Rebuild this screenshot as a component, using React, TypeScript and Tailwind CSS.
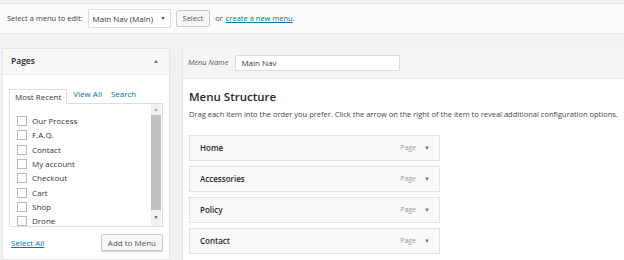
import React from "react";

const PAGES = ["Our Process", "F.A.Q.", "Contact", "My account", "Checkout", "Cart", "Shop", "Drone"];
const ITEMS = ["Home", "Accessories", "Policy", "Contact"];

function Checkbox() {
  return <span className="w-[10px] h-[10px] border border-[#b4b9be] bg-white shrink-0" />;
}

function PagesBox() {
  return (
    <div className="w-[168px] bg-white border border-[#e5e5e5] flex flex-col self-stretch">
      {/* header */}
      <div className="h-[26px] bg-[#f7f7f7] border-b border-[#eeeeee] flex items-center justify-between px-[8px]">
        <span className="text-[8.5px] font-semibold text-[#23282d]">Pages</span>
        <span className="text-[6px] text-[#72777c] mr-[2px]">▲</span>
      </div>

      <div className="px-[6px] pt-[13px]">
        {/* tabs */}
        <div className="flex items-end h-[15px] text-[8px]">
          <div className="h-[15px] px-[5px] flex items-center border border-b-0 border-[#dddddd] bg-white text-[#32373c] relative top-[1px]">
            Most Recent
          </div>
          <span className="ml-[6px] mb-[3px] text-[#0073aa]">View All</span>
          <span className="ml-[9px] mb-[3px] text-[#0073aa]">Search</span>
        </div>

        {/* list */}
        <div className="h-[124px] border border-[#dddddd] flex overflow-hidden">
          <div className="flex-1 pt-[10px] pl-[7px] flex flex-col">
            {PAGES.map((p) => (
              <div key={p} className="h-[14.3px] flex items-center gap-[5px] shrink-0">
                <Checkbox />
                <span className="text-[8px] text-[#32373c] leading-none">{p}</span>
              </div>
            ))}
          </div>
          <div className="w-[10px] bg-[#f1f1f1] flex flex-col items-center mr-[1px]">
            <span className="h-[11px] flex items-center text-[5px] text-[#a3a3a3]">▲</span>
            <div className="w-full flex-1 bg-[#c1c1c1]" />
            <span className="h-[16px] flex items-center text-[5px] text-[#505050]">▼</span>
          </div>
        </div>

        {/* footer */}
        <div className="flex items-center justify-between mt-[7px]">
          <span className="ml-[2px] text-[8px] text-[#0073aa] underline">Select All</span>
          <button className="h-[17px] px-[6px] border border-[#cccccc] bg-[#f7f7f7] rounded-[2px] text-[8px] text-[#555555] shadow-[0_1px_0_#cccccc]">
            Add to Menu
          </button>
        </div>
      </div>
    </div>
  );
}

function MenuPanel() {
  return (
    <div className="flex-1 bg-white border-l border-[#e5e5e5] flex flex-col self-stretch">
      <div className="h-[31px] bg-[#f5f5f5] border-b border-[#e8e8e8] flex items-center px-[5px] gap-[7px]">
        <span className="italic text-[7.5px] text-[#555555]">Menu Name</span>
        <div className="w-[165px] h-[16px] bg-white border border-[#dddddd] flex items-center px-[5px] text-[8px] text-[#32373c]">
          Main Nav
        </div>
      </div>

      <div className="px-[6px] pt-[10px]">
        <h3 className="text-[11.5px] font-semibold text-[#23282d] leading-[16px]">Menu Structure</h3>
        <p className="mt-[3px] text-[7.5px] text-[#444444] whitespace-nowrap leading-[12px]">
          Drag each item into the order you prefer. Click the arrow on the right of the item to reveal additional
          configuration options.
        </p>
        <div className="mt-[15px] flex flex-col gap-[5px] w-[251px]">
          {ITEMS.map((it) => (
            <div
              key={it}
              className="h-[26px] bg-[#f9f9f9] border border-[#e2e2e2] flex items-center pl-[10px] pr-[9px]"
            >
              <span className="flex-1 text-[8px] font-semibold text-[#23282d]">{it}</span>
              <span className="text-[7px] text-[#999999]">Page</span>
              <span className="ml-[8px] text-[6px] text-[#777777]">▼</span>
            </div>
          ))}
        </div>
      </div>
    </div>
  );
}

export default function App() {
  return (
    <div
      className="w-[624px] h-[260px] bg-[#f1f1f1] overflow-hidden flex flex-col"
      style={{ fontFamily: '"Open Sans", "Noto Sans", sans-serif' }}
    >
      {/* top bar */}
      <div className="mt-[3px] h-[31px] bg-[#fbfbfb] border-y border-[#e5e5e5] flex items-center px-[7px] text-[7.5px] text-[#444444] shrink-0">
        <span>Select a menu to edit:</span>
        <div className="ml-[5px] w-[83px] h-[19px] bg-white border border-[#dddddd] flex items-center justify-between px-[4px] text-[8px] text-[#32373c]">
          <span>Main Nav (Main)</span>
          <span className="text-[5px] text-[#333333]">▼</span>
        </div>
        <button className="ml-[5px] h-[17px] px-[6px] border border-[#cccccc] bg-[#f7f7f7] rounded-[2px] text-[#555555]">
          Select
        </button>
        <span className="ml-[5px]">or</span>
        <span className="ml-[3px] text-[#0073aa] underline">create a new menu</span>
        <span>.</span>
      </div>

      <div className="flex flex-1 mt-[14px] gap-[12px] pl-[2px]">
        <PagesBox />
        <MenuPanel />
      </div>
    </div>
  );
}
